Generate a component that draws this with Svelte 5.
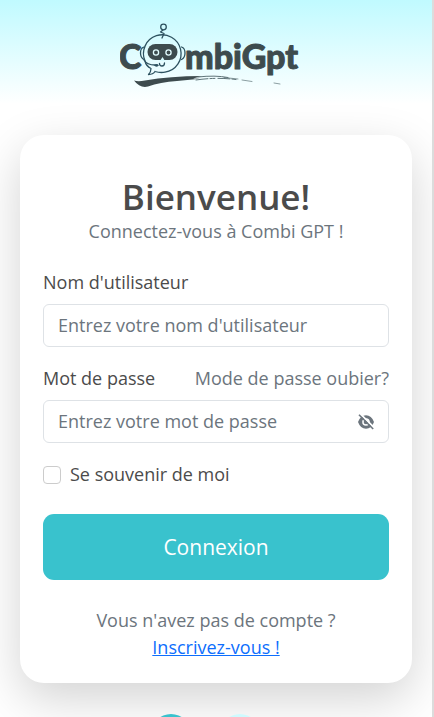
<script>
  let username = $state('');
  let password = $state('');
  let remember = $state(false);
  let visible = $state(false);
</script>

<div class="page">
  <header>
    <svg class="logo" viewBox="0 0 192 72" role="img" aria-label="CombiGpt">
      <g class="word">
        <text x="-1" y="49">C</text>
        <text x="65" y="49">mbiGpt</text>
      </g>
      <g fill="none" stroke="#2d5260" stroke-width="1.3" stroke-linecap="round" stroke-linejoin="round">
        <circle cx="43.500" cy="7" r="2.800" />
        <path d="M43 10 L40.500 12 L44 13.500 L42 18" />
        <path d="M35 51.500 Q40 53 45 52.200 A18.800 18.800 0 1 0 25 41 Q26 46 31 48.500 Q31 52 28.500 54.500 Q33 54.500 35 51.500" />
        <path d="M24 27 Q20.500 28 20.500 33 Q20.500 38 24 39.500" />
        <path d="M61.500 27 Q65 28 65 33 Q65 38 61.500 39.500" />
        <path d="M24 40 Q27 45 35 45" />
        <path d="M39.500 43.500 Q39.500 46 42 46 Q44.500 46 44.500 43" />
      </g>
      <rect x="27.500" y="24" width="30" height="16" rx="8" fill="#3d4b4e" />
      <path d="M40 41 L42.500 37 L45 41 Z" fill="#d9fcff" />
      <ellipse cx="36.500" cy="45.300" rx="2" ry="1.400" fill="#2d5260" />
      <g fill="#3d4b4e" stroke="#e3fdff" stroke-width="1.300">
        <circle cx="36" cy="32.500" r="2.600" />
        <circle cx="48.500" cy="32.500" r="2.600" />
      </g>
      <path d="M14 60.500 Q18 62 25 60.500 Q50 56 82 56 L73 58.500 L80 58.800 L57 61 Q40 62 28 66.500 Q20 68.500 14 60.500 Z" fill="#3d4b4e" />
      <g fill="none" stroke="#5f7479" stroke-linecap="round">
        <path d="M78 57 Q95 55 108 57.500" stroke-width="1" />
        <path d="M76 60 Q96 57 116 59.500" stroke-width="1" stroke-dasharray="12 2 5 3" />
        <path d="M104 57.500 L118 59 M122 60 L132 61.500 M154 63 L160 64" stroke-width=".7" />
      </g>
    </svg>
  </header>

  <main>
    <h1>Bienvenue!</h1>
    <p class="lead">Connectez-vous à Combi GPT !</p>

    <form onsubmit={(e) => e.preventDefault()}>
      <div class="row"><label for="username">Nom d'utilisateur</label></div>
      <div class="field">
        <input id="username" type="text" placeholder="Entrez votre nom d'utilisateur" bind:value={username} />
      </div>

      <div class="row">
        <label for="password">Mot de passe</label>
        <a class="forgot" href="#forgot">Mode de passe oubier?</a>
      </div>
      <div class="field">
        <input id="password" type={visible ? 'text' : 'password'} placeholder="Entrez votre mot de passe" bind:value={password} />
        <button class="eye" type="button" aria-label="Afficher le mot de passe" onclick={() => (visible = !visible)}>
          <svg viewBox="0 0 16 16" width="16" height="16">
            <path fill="currentColor" fill-rule="evenodd" d="M0 8 Q2.500 1.200 8 1.200 Q13.500 1.200 16 8 Q13.500 14.800 8 14.800 Q2.500 14.800 0 8 Z M8 4.200 a3.800 3.800 0 1 0 0 7.600 a3.800 3.800 0 1 0 0-7.600 Z" />
            <circle cx="8" cy="8" r="2.300" fill="currentColor" />
            <path d="M2.500 0 L16 13.500" stroke="#fff" stroke-width="1.800" />
            <path d="M1 .8 L15.200 15" stroke="currentColor" stroke-width="1.600" />
          </svg>
        </button>
      </div>

      <div class="remember">
        <input id="remember" type="checkbox" bind:checked={remember} />
        <label for="remember">Se souvenir de moi</label>
      </div>

      <button class="submit" type="submit">Connexion</button>
    </form>

    <p class="signup">Vous n'avez pas de compte ?<br /><a href="#signup">Inscrivez-vous !</a></p>
  </main>

  <div class="dots" aria-hidden="true">
    <span class="teal"></span>
    <span class="pale"></span>
  </div>
</div>

<style>
  .page {
    box-sizing: border-box;
    height: 100vh;
    overflow: hidden auto;
    scrollbar-width: none;
    padding: 20px 20px 0;
    border-right: 2px solid #dcdcdc;
    background: linear-gradient(#c0faff, #fff 104px) #fff;
    font: 18px/27px "Open Sans", "Noto Sans", sans-serif;
    color: #4b4b4b;
  }
  header {
    display: flex;
    justify-content: center;
    margin-bottom: 43px;
  }
  .logo {
    width: 192px;
    height: 72px;
  }
  .word {
    font: 900 34px Lato, "Liberation Sans", sans-serif;
    fill: #3d4b4e;
    stroke: #3d4b4e;
    stroke-width: 1;
    stroke-linejoin: round;
  }
  main {
    padding: 40px 23px 22px;
    border-radius: 24px;
    background: #fff;
    box-shadow: 0 16px 48px rgba(0, 0, 0, 0.175);
  }
  h1 {
    margin: 0;
    font-size: 35px;
    line-height: 43px;
    font-weight: 600;
    text-align: center;
  }
  p {
    margin: 0;
    text-align: center;
    color: #6c757d;
  }
  .lead {
    margin-bottom: 24px;
  }
  .row {
    display: flex;
    justify-content: space-between;
    margin-bottom: 8px;
  }
  .forgot {
    color: #6c757d;
    text-decoration: none;
  }
  .field {
    display: flex;
    align-items: center;
    box-sizing: border-box;
    height: 43px;
    margin-bottom: 18px;
    padding: 0 14px;
    border: 1px solid #dee2e6;
    border-radius: 6px;
  }
  .field input {
    flex: 1;
    min-width: 0;
    padding: 0;
    border: 0;
    outline: 0;
    background: none;
    font: inherit;
    color: inherit;
  }
  .field input::placeholder {
    color: #6c757d;
    opacity: 1;
  }
  .eye {
    display: flex;
    padding: 0;
    border: 0;
    background: none;
    color: #6c757d;
  }
  .remember {
    display: flex;
    align-items: center;
    gap: 9px;
    margin-bottom: 26px;
  }
  .remember input {
    appearance: none;
    width: 18px;
    height: 18px;
    margin: 0;
    border: 1px solid #ccc;
    border-radius: 4px;
  }
  .remember input:checked {
    background: #39c2cd;
  }
  .submit {
    width: 100%;
    height: 66px;
    border: 0;
    border-radius: 11px;
    background: #39c2cd;
    color: #fff;
    font: inherit;
    font-size: 21px;
  }
  .signup {
    margin-top: 27px;
  }
  .signup a {
    color: #0d6efd;
  }
  .dots {
    display: flex;
    justify-content: center;
    gap: 29px;
    margin-top: 31px;
    padding-right: 22px;
  }
  .dots span {
    width: 40px;
    height: 40px;
    border-radius: 50%;
  }
  .teal {
    background: #39c2cd;
  }
  .pale {
    background: #cffafe;
  }
</style>
